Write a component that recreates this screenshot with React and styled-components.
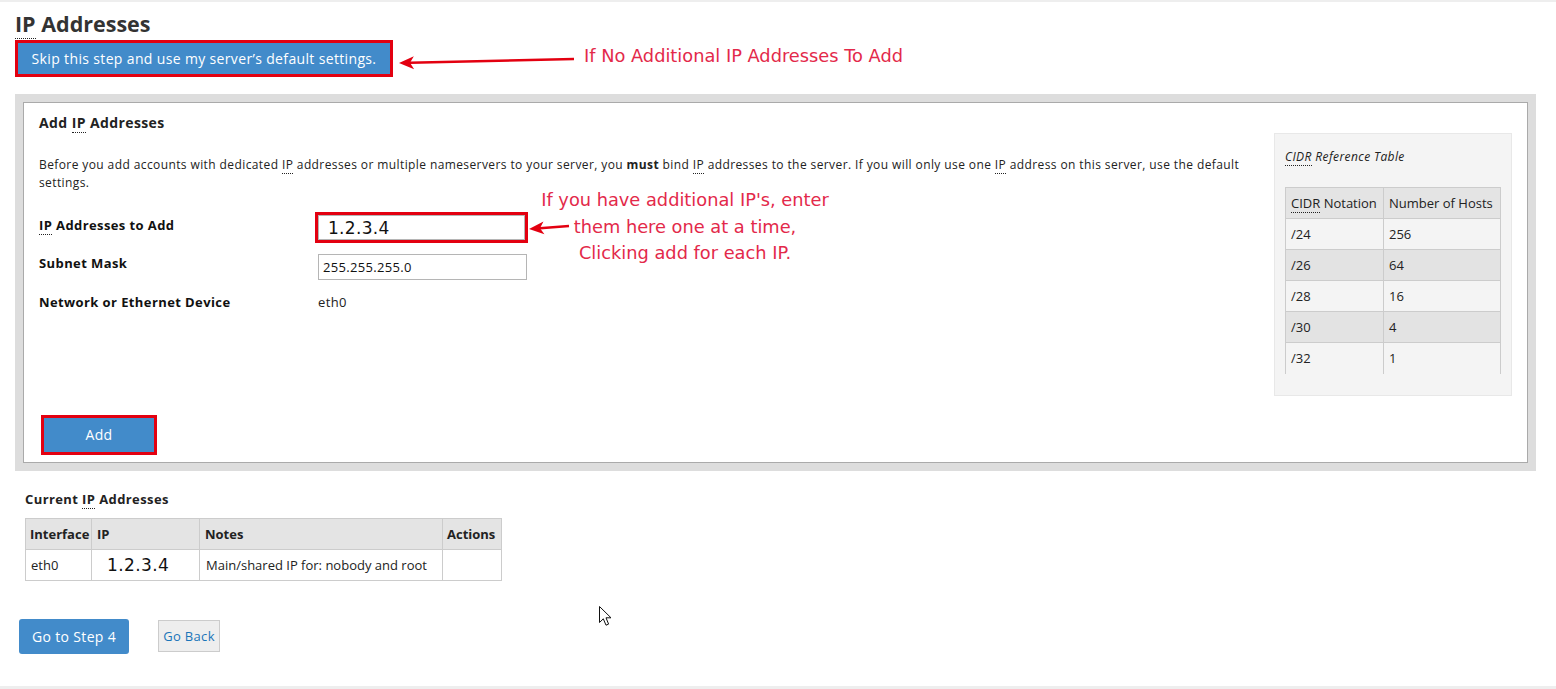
import React from "react";
import styled, { createGlobalStyle } from "styled-components";

const GlobalStyle = createGlobalStyle`
  html, body { margin: 0; padding: 0; background: #fff; }
  body {
    font-family: "Open Sans", "Liberation Sans", sans-serif;
    color: #333;
    letter-spacing: 0.025em;
  }
  * { box-sizing: border-box; }
`;

const Page = styled.div`
  position: relative;
  width: 1556px;
  height: 689px;
  border-top: 2px solid #eeeeee;
  overflow: hidden;
`;

const Content = styled.div`
  padding: 0 20px 0 15px;
`;

const Abbr = styled.abbr`
  text-decoration: none;
  border-bottom: 1px dotted #222;
  cursor: help;
`;

const Title = styled.h1`
  margin: 9px 0 0;
  font-size: 21.5px;
  line-height: 26px;
  font-weight: 700;
  letter-spacing: 0;
  color: #333;
`;

const Highlight = styled.div`
  display: inline-block;
  border: 3px solid #e30010;
  margin: ${(p) => p.$m || "0"};
`;

const PrimaryButton = styled.button`
  display: flex;
  align-items: center;
  justify-content: center;
  width: ${(p) => p.$w};
  height: ${(p) => p.$h};
  padding: 0;
  border: 0;
  border-radius: ${(p) => p.$r || "0"};
  background: #428bca;
  color: #fff;
  font-family: "Open Sans", "Liberation Sans", sans-serif;
  font-size: 14px;
  letter-spacing: 0.025em;
  cursor: pointer;
`;

const GrayPanel = styled.div`
  margin-top: 17px;
  padding: 8px;
  background: #dddddd;
`;

const WhitePanel = styled.div`
  border: 1px solid #aaaaaa;
  background: #fff;
  padding: 10px 15px 7px 15px;
`;

const PanelRow = styled.div`
  display: flex;
  align-items: flex-start;
  gap: 25px;
`;

const LeftCol = styled.div`
  flex: 1;
`;

const PanelHeading = styled.h2`
  margin: 0;
  font-size: 14px;
  line-height: 20px;
  font-weight: 700;
  color: #222;
`;

const Para = styled.p`
  margin: 23px 0 0;
  font-size: 12px;
  line-height: 18px;
  color: #222;
`;

const Form = styled.div`
  margin-top: 20px;
  display: grid;
  grid-template-columns: 279px auto;
  align-items: start;
`;

const Label = styled.div`
  font-size: 13px;
  font-weight: 700;
  line-height: 18px;
  color: #111;
  padding-top: ${(p) => p.$pt || "0"};
  margin-bottom: ${(p) => p.$mb || "0"};
`;

const Field = styled.div`
  margin-bottom: ${(p) => p.$mb || "0"};
  margin-left: ${(p) => p.$ml || "0"};
`;

const TextInput = styled.input`
  display: block;
  width: ${(p) => p.$w};
  height: ${(p) => p.$h};
  border: 1px solid #b5b5b5;
  padding: 0 ${(p) => p.$px || "4px"};
  font-family: ${(p) =>
    p.$big ? '"DejaVu Sans", sans-serif' : '"Open Sans", "Liberation Sans", sans-serif'};
  font-size: ${(p) => (p.$big ? "17px" : "13px")};
  letter-spacing: ${(p) => (p.$big ? "0.3px" : "0.025em")};
  color: #111;
  outline: none;
`;

const Plain = styled.div`
  font-size: 13px;
  line-height: 18px;
  color: #222;
`;

const CidrPanel = styled.div`
  width: 238px;
  flex: none;
  margin-top: 20px;
  background: #f4f4f4;
  border: 1px solid #e8e8e8;
  padding: 14px 10px 21px 10px;
`;

const CidrTitle = styled.div`
  font-size: 12px;
  line-height: 18px;
  font-style: italic;
  color: #222;
`;

const Table = styled.table`
  border-collapse: collapse;
  margin-top: ${(p) => p.$mt || "0"};
  font-size: 13px;
  letter-spacing: ${(p) => p.$ls || "0.01em"};
  color: #222;
  width: ${(p) => p.$w || "100%"};
  table-layout: fixed;
  ${(p) => (p.$outer ? "border: 1px solid #cccccc;" : "")}
`;

const Th = styled.th`
  height: 31px;
  padding: 0 ${(p) => p.$px || "5px"};
  text-align: left;
  background: #e4e4e4;
  font-weight: ${(p) => (p.$bold ? 700 : 400)};
  border: 1px solid #cccccc;
  width: ${(p) => p.$w || "auto"};
  white-space: nowrap;
`;

const Td = styled.td`
  height: 31px;
  padding: 0 ${(p) => p.$px || "5px"};
  border-left: 1px solid #cccccc;
  border-right: 1px solid #cccccc;
  border-bottom: ${(p) => (p.$nobottom ? "0" : "1px solid #cccccc")};
  background: ${(p) => p.$bg || "transparent"};
  white-space: nowrap;
`;

const BigIp = styled.span`
  font-family: "DejaVu Sans", sans-serif;
  font-size: 17px;
  letter-spacing: 0.4px;
  color: #111;
`;

const AddRow = styled.div`
  margin-top: 19px;
  margin-left: 2px;
`;

const Current = styled.div`
  padding-left: 10px;
  margin-top: 19px;
`;

const CurrentHeading = styled.div`
  font-size: 13px;
  line-height: 18px;
  font-weight: 700;
  color: #222;
`;

const ButtonRow = styled.div`
  display: flex;
  align-items: center;
  gap: 29px;
  margin-top: 38px;
  padding-left: 4px;
`;

const GhostButton = styled.button`
  width: 62px;
  height: 32px;
  padding: 0;
  background: #eeeeee;
  border: 1px solid #cccccc;
  color: #1a75b9;
  font-family: "Open Sans", "Liberation Sans", sans-serif;
  font-size: 13px;
  letter-spacing: 0.025em;
  cursor: pointer;
`;

const Footer = styled.div`
  position: absolute;
  left: 0;
  right: 0;
  bottom: 0;
  height: 3px;
  background: #eeeeee;
`;

const Note = styled.div`
  position: absolute;
  left: ${(p) => p.$x}px;
  top: ${(p) => p.$y}px;
  width: ${(p) => (p.$w ? p.$w + "px" : "auto")};
  font-family: "DejaVu Sans", sans-serif;
  font-size: 17.8px;
  letter-spacing: 0;
  line-height: ${(p) => p.$lh || "20px"};
  color: #e3294a;
  text-align: center;
  white-space: nowrap;
`;

const Overlay = styled.svg`
  position: absolute;
  left: ${(p) => p.$x}px;
  top: ${(p) => p.$y}px;
  overflow: visible;
`;

const Arrow = ({ x1, y1, x2, y2 }) => {
  const ang = Math.atan2(y1 - y2, x1 - x2);
  const L = 15;
  const W = 6.5;
  const bx = x2 + Math.cos(ang) * L;
  const by = y2 + Math.sin(ang) * L;
  const nx = -Math.sin(ang) * W;
  const ny = Math.cos(ang) * W;
  const mx = x2 + Math.cos(ang) * (L - 4);
  const my = y2 + Math.sin(ang) * (L - 4);
  return (
    <Overlay $x={0} $y={0} width="1" height="1">
      <line x1={x1} y1={y1} x2={mx} y2={my} stroke="#e30010" strokeWidth="2.6" />
      <polygon
        points={`${x2},${y2} ${bx + nx},${by + ny} ${mx},${my} ${bx - nx},${by - ny}`}
        fill="#e30010"
      />
    </Overlay>
  );
};

const Cursor = () => (
  <Overlay $x={599} $y={604} width="14" height="22">
    <path
      d="M0.5 0.5 L0.5 16.5 L4.3 12.8 L7 19.2 L9.6 18.1 L7 11.8 L12 11.8 Z"
      fill="#fff"
      stroke="#111"
      strokeWidth="1"
      strokeLinejoin="round"
    />
  </Overlay>
);

const cidrRows = [
  ["/24", "256"],
  ["/26", "64"],
  ["/28", "16"],
  ["/30", "4"],
  ["/32", "1"],
];

export default function App() {
  return (
    <>
      <GlobalStyle />
      <Page>
        <Content>
          <Title>
            <Abbr title="Internet Protocol">IP</Abbr> Addresses
          </Title>
          <Highlight $m="3px 0 0">
            <PrimaryButton $w="372px" $h="31px">
              Skip this step and use my server’s default settings.
            </PrimaryButton>
          </Highlight>

          <GrayPanel>
            <WhitePanel>
              <PanelRow>
                <LeftCol>
                  <PanelHeading>
                    Add <Abbr>IP</Abbr> Addresses
                  </PanelHeading>
                  <Para>
                    Before you add accounts with dedicated <Abbr>IP</Abbr> addresses or multiple
                    nameservers to your server, you <b>must</b> bind <Abbr>IP</Abbr> addresses to
                    the server. If you will only use one <Abbr>IP</Abbr> address on this server, use
                    the default settings.
                  </Para>
                  <Form>
                    <Label $pt="4px" $mb="11px">
                      <Abbr>IP</Abbr> Addresses to Add
                    </Label>
                    <Field $mb="11px" $ml="-3px">
                      <Highlight>
                        <TextInput $w="207px" $h="25px" $px="9px" $big defaultValue="1.2.3.4" />
                      </Highlight>
                    </Field>
                    <Label $mb="13px">Subnet Mask</Label>
                    <Field $mb="13px">
                      <TextInput $w="209px" $h="26px" defaultValue="255.255.255.0" />
                    </Field>
                    <Label>Network or Ethernet Device</Label>
                    <Plain>eth0</Plain>
                  </Form>
                </LeftCol>

                <CidrPanel>
                  <CidrTitle>
                    <Abbr>CIDR</Abbr> Reference Table
                  </CidrTitle>
                  <Table $mt="21px" $ls="0">
                    <thead>
                      <tr>
                        <Th $w="98px">
                          <Abbr>CIDR</Abbr> Notation
                        </Th>
                        <Th>Number of Hosts</Th>
                      </tr>
                    </thead>
                    <tbody>
                      {cidrRows.map(([n, h], i) => (
                        <tr key={n}>
                          <Td
                            $bg={i % 2 ? "#e3e3e3" : "#f4f4f4"}
                            $nobottom={i === cidrRows.length - 1}
                          >
                            {n}
                          </Td>
                          <Td
                            $bg={i % 2 ? "#e3e3e3" : "#f4f4f4"}
                            $nobottom={i === cidrRows.length - 1}
                          >
                            {h}
                          </Td>
                        </tr>
                      ))}
                    </tbody>
                  </Table>
                </CidrPanel>
              </PanelRow>

              <AddRow>
                <Highlight>
                  <PrimaryButton $w="110px" $h="34px">
                    Add
                  </PrimaryButton>
                </Highlight>
              </AddRow>
            </WhitePanel>
          </GrayPanel>

          <Current>
            <CurrentHeading>
              Current <Abbr>IP</Abbr> Addresses
            </CurrentHeading>
            <Table $mt="10px" $outer $w="476px" $ls="0">
              <thead>
                <tr>
                  <Th $bold $w="66px" $px="4px">Interface</Th>
                  <Th $bold $w="108px">IP</Th>
                  <Th $bold $w="243px">Notes</Th>
                  <Th $bold $w="59px" $px="4px">Actions</Th>
                </tr>
              </thead>
              <tbody>
                <tr>
                  <Td>eth0</Td>
                  <Td $px="15px">
                    <BigIp>1.2.3.4</BigIp>
                  </Td>
                  <Td $px="6px">Main/shared IP for: nobody and root</Td>
                  <Td />
                </tr>
              </tbody>
            </Table>
          </Current>

          <ButtonRow>
            <PrimaryButton $w="110px" $h="35px" $r="3px">
              Go to Step 4
            </PrimaryButton>
            <GhostButton>Go Back</GhostButton>
          </ButtonRow>
        </Content>

        <Arrow x1={574} y1={57} x2={399} y2={61} />
        <Note $x={584} $y={44}>If No Additional IP Addresses To Add</Note>

        <Arrow x1={569} y1={224} x2={529} y2={227} />
        <Note $x={525} $y={185} $w={320} $lh="26.5px">
          If you have additional IP's, enter
          <br />
          them here one at a time,
          <br />
          Clicking add for each IP.
        </Note>

        <Cursor />
        <Footer />
      </Page>
    </>
  );
}
